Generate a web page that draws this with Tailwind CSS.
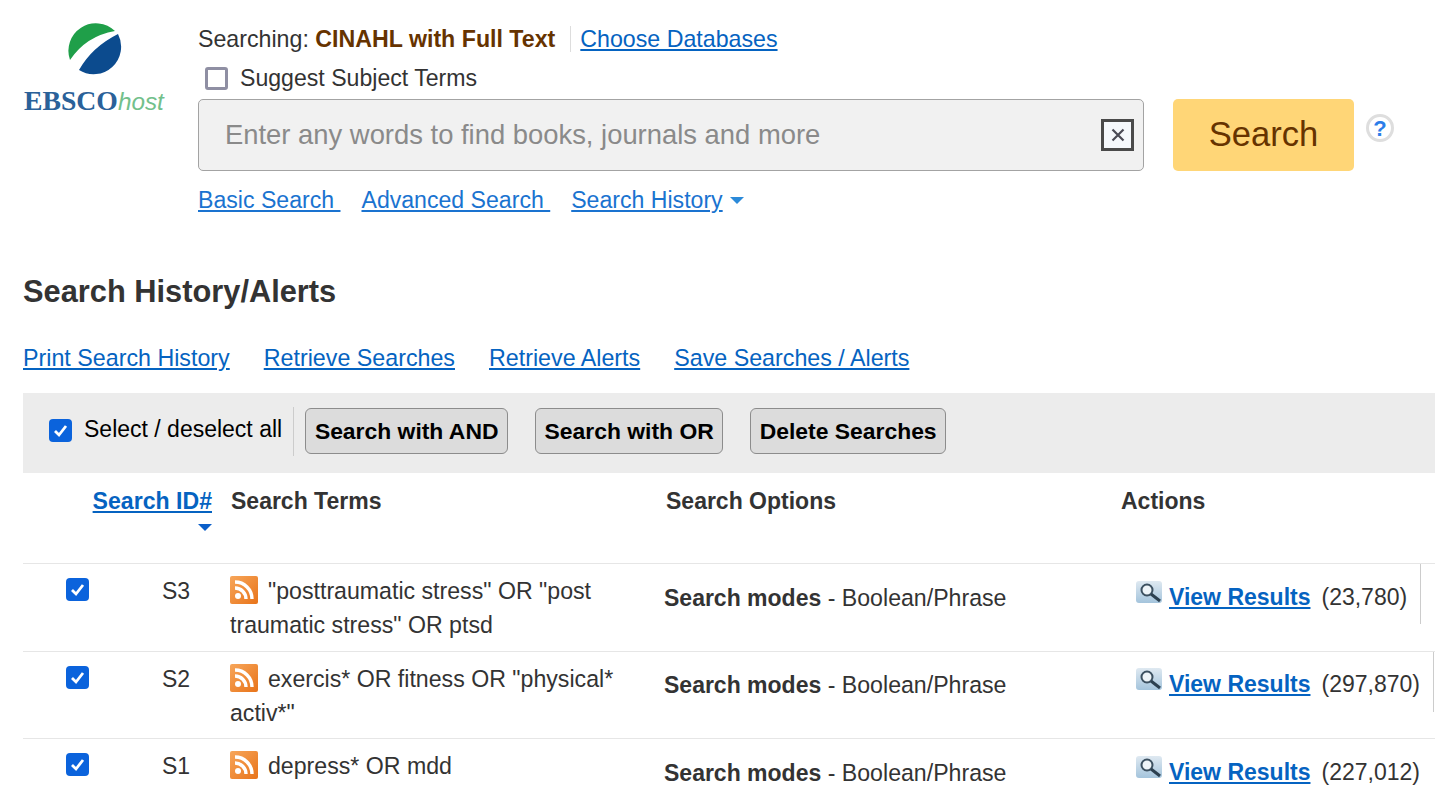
<!DOCTYPE html>
<html lang="en">
<head>
<meta charset="UTF-8">
<title>EBSCOhost: Search History</title>
<script src="https://cdn.jsdelivr.net/npm/@tailwindcss/browser@4"></script>
</head>
<body class="bg-white font-['Liberation_Sans',Arial,sans-serif] text-[#333] h-[802px] overflow-hidden">
<!-- shared gradients for the rss and magnifier icons -->
<svg width="0" height="0" class="absolute">
  <defs>
    <linearGradient id="rssFill" x1="0" y1="0" x2="1" y2="1"><stop offset="0" stop-color="#f7a65a"/><stop offset="1" stop-color="#e8741a"/></linearGradient>
    <linearGradient id="lensBox" x1="0" y1="0" x2="0" y2="1"><stop offset="0" stop-color="#dfe9f1"/><stop offset="1" stop-color="#a4c4dc"/></linearGradient>
  </defs>
</svg>
<!-- Header -->
<header class="flex h-[247px]">
  <div class="w-[198px] shrink-0 pl-[24px] pt-[20px]">
    <svg class="block" width="140" height="56" viewBox="0 0 140 56">
      <path d="M46 40 A27.5 27.5 0 0 1 91 11 Q62 16 46 40 Z" fill="#1f9f49"/>
      <path d="M94 14 A27.5 27.5 0 0 1 55 50 Q68 27 94 14 Z" fill="#0c4b8e"/>
    </svg>
    <div class="flex items-baseline h-[36px] leading-[36px] whitespace-nowrap mt-[7px]">
      <span class="font-['Liberation_Serif'] font-bold text-[27.7px] text-[#2a6199]">EBSCO</span>
      <span class="italic text-[24.3px] text-[#72c08b]">host</span>
    </div>
  </div>
  <div class="flex-1">
    <div class="flex items-center h-[26px] mt-[26px] text-[23.2px] leading-[26px]">
      <span>Searching:&nbsp;</span><strong class="text-[#663300]">CINAHL with Full Text</strong>
      <span class="border-l border-[#ddd] h-[26px] ml-[15px] mr-[9px]"></span>
      <a href="#" class="text-[#0563c1] underline">Choose Databases</a>
    </div>
    <label class="flex items-center h-[26px] mt-[13px] ml-[7px] text-[23.1px]">
      <span class="w-[23px] h-[23px] rounded-[3px] border-[3px] border-[#8f8fa3] bg-white mr-[12px]"></span>
      Suggest Subject Terms
    </label>
    <div class="flex mt-[8px]">
      <div class="flex items-center justify-between w-[946px] h-[72px] bg-[#f1f1f1] border border-[#a3a3a3] rounded-[5px] pl-[26px] pr-[9px]">
        <span class="text-[27.4px] text-[#8a8a8a]">Enter any words to find books, journals and more</span>
        <span class="flex items-center justify-center w-[33px] h-[32px] border-[3px] border-[#4a4a4a] bg-[#f5f8fc]">
          <svg width="16" height="16" viewBox="0 0 16 16"><path d="M2.5 2.5 13.5 13.5M13.5 2.5 2.5 13.5" stroke="#4a4a55" stroke-width="2.2"/></svg>
        </span>
      </div>
      <button class="w-[181px] h-[72px] ml-[29px] bg-[#ffd677] rounded-[5px] text-[34.6px] text-[#663300]">Search</button>
      <span class="flex items-center justify-center w-[28px] h-[28px] ml-[12px] mt-[15px] rounded-full border-[3px] border-[#dedede] bg-white text-[#2b7de9] text-[22px] font-bold">?</span>
    </div>
    <nav class="flex items-center mt-[15px] text-[23.1px] leading-[28px] text-[#1a73d0]">
      <a href="#" class="underline whitespace-pre">Basic Search </a>
      <a href="#" class="underline whitespace-pre ml-[21px]">Advanced Search </a>
      <a href="#" class="underline ml-[21px]">Search History</a>
      <span class="ml-[7px] mt-[1px] border-x-[7px] border-t-[7px] border-x-transparent border-t-[#2b8ad9]"></span>
    </nav>
  </div>
</header>

<main class="pl-[23px]">
  <h1 class="text-[30.8px] leading-[36px] font-bold text-[#333] mt-[27px]">Search History/Alerts</h1>
  <div class="flex gap-[34px] mt-[34px] h-[34px] text-[23.25px] leading-[28px] text-[#0563c1]">
    <a href="#" class="underline">Print Search History</a>
    <a href="#" class="underline">Retrieve Searches</a>
    <a href="#" class="underline">Retrieve Alerts</a>
    <a href="#" class="underline">Save Searches / Alerts</a>
  </div>

  <!-- Toolbar -->
  <div class="flex items-center h-[80px] mt-[15px] bg-[#ececec] pl-[26px] text-[23px] text-black">
    <span class="flex items-center justify-center w-[23px] h-[23px] mb-[6px] rounded-[4px] bg-[#0b63dc]">
      <svg width="15" height="15" viewBox="0 0 15 15"><path d="M2 8 6 12 13 3" fill="none" stroke="#fff" stroke-width="2.8"/></svg>
    </span>
    <span class="ml-[12px] mb-[7px]">Select / deselect all</span>
    <span class="border-l border-[#ccc] h-[49px] ml-[11px] mb-[4px]"></span>
    <button class="h-[46px] w-[203px] ml-[11px] mb-[4px] bg-[#dcdcdc] border border-[#8c8c8c] rounded-[6px] font-bold text-[22.9px]">Search with AND</button>
    <button class="h-[46px] w-[188px] ml-[27px] mb-[4px] bg-[#dcdcdc] border border-[#8c8c8c] rounded-[6px] font-bold text-[22.9px]">Search with OR</button>
    <button class="h-[46px] w-[196px] ml-[27px] mb-[4px] bg-[#dcdcdc] border border-[#8c8c8c] rounded-[6px] font-bold text-[22.9px]">Delete Searches</button>
  </div>

  <!-- Table head -->
  <div class="flex h-[91px] border-b border-[#e6e6e6] pt-[14px] text-[23px] leading-[28px] font-bold">
    <div class="w-[189px] flex flex-col items-end">
      <a href="#" class="underline text-[#0563c1] text-[23.1px]">Search ID#</a>
      <span class="mt-[9px] border-x-[7px] border-t-[7px] border-x-transparent border-t-[#0b5fc9]"></span>
    </div>
    <div class="w-[435px] ml-[19px]">Search Terms</div>
    <div class="w-[455px]">Search Options</div>
    <div>Actions</div>
  </div>

  <!-- S3 -->
  <div class="flex h-[88px] border-b border-[#e6e6e6] text-[23px] leading-[34px]">
    <div class="w-[139px] shrink-0 pl-[43px] pt-[14px]">
      <span class="flex items-center justify-center w-[23px] h-[23px] rounded-[4px] bg-[#0b63dc]">
        <svg width="15" height="15" viewBox="0 0 15 15"><path d="M2 8 6 12 13 3" fill="none" stroke="#fff" stroke-width="2.8"/></svg>
      </span>
    </div>
    <div class="w-[68px] shrink-0 pt-[10px]">S3</div>
    <div class="w-[434px] shrink-0 pt-[10px] text-[23.15px]">
      <svg class="inline-block align-[-5px] mr-[10px]" width="28" height="28" viewBox="0 0 28 28"><rect width="28" height="28" rx="2" fill="url(#rssFill)"/><circle cx="8" cy="20" r="3" fill="#fff"/><path d="M5 12a11 11 0 0 1 11 11M5 6a17 17 0 0 1 17 17" fill="none" stroke="#fff" stroke-width="3.4"/></svg>"posttraumatic stress" OR "post traumatic stress" OR ptsd
    </div>
    <div class="w-[472px] shrink-0 pt-[17px] text-[23.15px]"><b class="text-[23px]">Search modes</b> - Boolean/Phrase</div>
    <div class="flex pt-[16px] h-[60px] border-r border-[#ccc] pr-[13px]">
      <svg class="mt-[1px] mr-[6px]" width="27" height="24" viewBox="0 0 27 24"><rect width="26" height="22" rx="3" fill="url(#lensBox)"/><circle cx="11" cy="9" r="5.5" fill="#eef4f8" stroke="#3c5060" stroke-width="2"/><path d="M15 13 24 20" stroke="#2c4050" stroke-width="3"/></svg>
      <a href="#" class="font-bold underline text-[#0563c1]">View Results</a>
      <span class="ml-[11px]">(23,780)</span>
    </div>
  </div>

  <!-- S2 -->
  <div class="flex h-[87px] border-b border-[#e6e6e6] text-[23px] leading-[34px]">
    <div class="w-[139px] shrink-0 pl-[43px] pt-[14px]">
      <span class="flex items-center justify-center w-[23px] h-[23px] rounded-[4px] bg-[#0b63dc]">
        <svg width="15" height="15" viewBox="0 0 15 15"><path d="M2 8 6 12 13 3" fill="none" stroke="#fff" stroke-width="2.8"/></svg>
      </span>
    </div>
    <div class="w-[68px] shrink-0 pt-[10px]">S2</div>
    <div class="w-[434px] shrink-0 pt-[10px] text-[23.15px]">
      <svg class="inline-block align-[-5px] mr-[10px]" width="28" height="28" viewBox="0 0 28 28"><rect width="28" height="28" rx="2" fill="url(#rssFill)"/><circle cx="8" cy="20" r="3" fill="#fff"/><path d="M5 12a11 11 0 0 1 11 11M5 6a17 17 0 0 1 17 17" fill="none" stroke="#fff" stroke-width="3.4"/></svg>exercis* OR fitness OR "physical* activ*"
    </div>
    <div class="w-[472px] shrink-0 pt-[16px] text-[23.15px]"><b class="text-[23px]">Search modes</b> - Boolean/Phrase</div>
    <div class="flex pt-[15px] h-[60px] border-r border-[#ccc] pr-[13px]">
      <svg class="mt-[1px] mr-[6px]" width="27" height="24" viewBox="0 0 27 24"><rect width="26" height="22" rx="3" fill="url(#lensBox)"/><circle cx="11" cy="9" r="5.5" fill="#eef4f8" stroke="#3c5060" stroke-width="2"/><path d="M15 13 24 20" stroke="#2c4050" stroke-width="3"/></svg>
      <a href="#" class="font-bold underline text-[#0563c1]">View Results</a>
      <span class="ml-[11px]">(297,870)</span>
    </div>
  </div>

  <!-- S1 -->
  <div class="flex h-[64px] text-[23px] leading-[34px]">
    <div class="w-[139px] shrink-0 pl-[43px] pt-[14px]">
      <span class="flex items-center justify-center w-[23px] h-[23px] rounded-[4px] bg-[#0b63dc]">
        <svg width="15" height="15" viewBox="0 0 15 15"><path d="M2 8 6 12 13 3" fill="none" stroke="#fff" stroke-width="2.8"/></svg>
      </span>
    </div>
    <div class="w-[68px] shrink-0 pt-[10px]">S1</div>
    <div class="w-[434px] shrink-0 pt-[10px] text-[23.15px]">
      <svg class="inline-block align-[-5px] mr-[10px]" width="28" height="28" viewBox="0 0 28 28"><rect width="28" height="28" rx="2" fill="url(#rssFill)"/><circle cx="8" cy="20" r="3" fill="#fff"/><path d="M5 12a11 11 0 0 1 11 11M5 6a17 17 0 0 1 17 17" fill="none" stroke="#fff" stroke-width="3.4"/></svg>depress* OR mdd
    </div>
    <div class="w-[472px] shrink-0 pt-[17px] text-[23.15px]"><b class="text-[23px]">Search modes</b> - Boolean/Phrase</div>
    <div class="flex pt-[16px] h-[60px]">
      <svg class="mt-[1px] mr-[6px]" width="27" height="24" viewBox="0 0 27 24"><rect width="26" height="22" rx="3" fill="url(#lensBox)"/><circle cx="11" cy="9" r="5.5" fill="#eef4f8" stroke="#3c5060" stroke-width="2"/><path d="M15 13 24 20" stroke="#2c4050" stroke-width="3"/></svg>
      <a href="#" class="font-bold underline text-[#0563c1]">View Results</a>
      <span class="ml-[11px]">(227,012)</span>
    </div>
  </div>
</main>
</body>
</html>
